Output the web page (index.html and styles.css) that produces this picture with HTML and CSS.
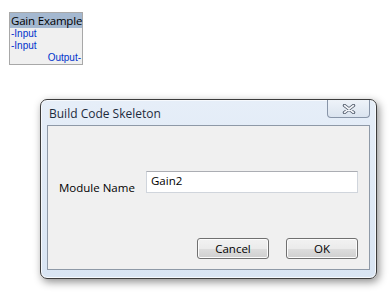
FILE: index.html
```html
<!DOCTYPE html>
<html lang="en">
<head>
  <meta charset="UTF-8" />
  <title>Build Code Skeleton</title>
  <link rel="stylesheet" href="styles.css">
</head>
<body>

  <!-- Bloco do diagrama -->
  <div class="block">
    <div class="block-title">Gain Example</div>
    <div class="port in">-Input</div>
    <div class="port in">-Input</div>
    <div class="port out">Output-</div>
  </div>

  <!-- Janela de diálogo -->
  <div class="dialog">
    <div class="titlebar">
      <span class="title">Build Code Skeleton</span>
      <button class="close" aria-label="Close">
        <svg viewBox="0 0 14 10" width="14" height="10">
          <path d="M2.5 1.5 L11.5 8.5 M11.5 1.5 L2.5 8.5" stroke="#4d5868" stroke-width="3.4" stroke-linecap="round"/>
          <path d="M2.5 1.5 L11.5 8.5 M11.5 1.5 L2.5 8.5" stroke="#f4f6fa" stroke-width="1.6" stroke-linecap="round"/>
        </svg>
      </button>
    </div>

    <div class="panel">
      <div class="field">
        <label for="module-name">Module Name</label>
        <input type="text" id="module-name" value="Gain2">
      </div>
      <div class="buttons">
        <button class="btn">Cancel</button>
        <button class="btn">OK</button>
      </div>
    </div>
  </div>

</body>
</html>
```

FILE: styles.css
```css
:root {
  --ui-font: "Open Sans", "Noto Sans", "DejaVu Sans", sans-serif;
  --panel-bg: #f0f0f0;
  --link-blue: #0033cc;
}

* {
  box-sizing: border-box;
  margin: 0;
  padding: 0;
}
body {
  background: #fff;
  font-family: var(--ui-font);
  color: #000;
  width: 390px;
  height: 298px;
  overflow: hidden;
}

/* Bloco "Gain Example" */
.block {
  margin: 12px 0 0 9px;
  width: 74px;
  border: 1px solid #a8a8a8;
  background: var(--panel-bg);
}
.block-title {
  background: #a4b8d0;
  color: #000;
  font-size: 11.5px;
  line-height: 15px;
  padding-left: 1px;
  white-space: nowrap;
  letter-spacing: -0.2px;
}
.port {
  font-family: "Liberation Sans", Arial, sans-serif;
  font-size: 10px;
  line-height: 12px;
  color: var(--link-blue);
  padding: 0 1px;
}
.port.out {
  text-align: right;
}

/* Diálogo */
.dialog {
  margin: 34px 0 0 40px;
  width: 337px;
  height: 180px;
  border: 1px solid #3c3c3c;
  border-radius: 7px;
  background: linear-gradient(#e6eef8, #d9e5f3);
  box-shadow: 2px 3px 8px rgba(0, 0, 0, 0.45), inset 0 0 0 1px #f6f9fd;
  display: flex;
  flex-direction: column;
}
.titlebar {
  height: 25px;
  display: flex;
  justify-content: space-between;
  align-items: flex-start;
  padding: 0 6px 0 8px;
}
.title {
  font-size: 12px;
  margin-top: 5px;
  color: #1e2b3c;
}
.close {
  width: 43px;
  height: 18px;
  border: 1px solid #8895a8;
  border-top: none;
  border-radius: 0 0 4px 4px;
  background: linear-gradient(#eef3f9, #dbe4ef);
  display: flex;
  align-items: center;
  justify-content: center;
}

.panel {
  flex: 1;
  margin: 0 6px 8px 6px;
  border: 1px solid #8e99a7;
  background: var(--panel-bg);
  padding: 42px 11px 10px 11px;
  display: flex;
  flex-direction: column;
  justify-content: space-between;
}
.field {
  display: flex;
  align-items: center;
  font-size: 11.5px;
}
.field label {
  width: 87px;
  padding-top: 12px;
}
.field input {
  flex: 1;
  height: 22px;
  border: 1px solid #d0d5dc;
  border-top-color: #abadb3;
  background: #fff;
  font-family: var(--ui-font);
  font-size: 11.5px;
  padding: 0 4px 3px 4px;
  color: #000;
}

.buttons {
  display: flex;
  justify-content: flex-end;
  gap: 17px;
}
.btn {
  width: 72px;
  height: 21px;
  border: 1px solid #707070;
  border-radius: 3px;
  background: linear-gradient(#f2f2f2 0%, #ebebeb 50%, #dddddd 51%, #cfcfcf 100%);
  box-shadow: inset 0 0 0 1px #fcfcfc;
  font-family: var(--ui-font);
  font-size: 11.5px;
  color: #000;
}
```
